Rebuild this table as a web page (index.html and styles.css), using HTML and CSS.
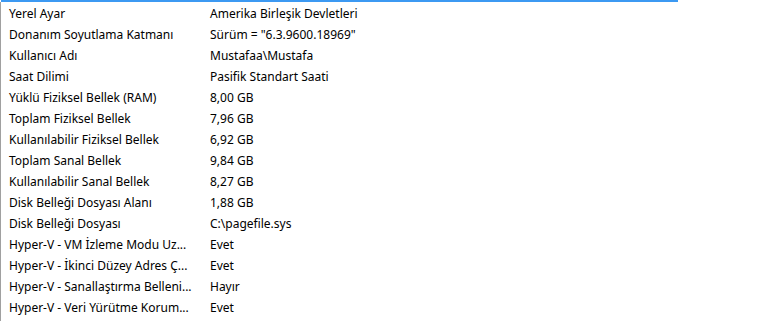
FILE: index.html
```html
<!DOCTYPE html>
<html lang="tr">
<head>
<meta charset="utf-8">
<link rel="stylesheet" href="styles.css">
</head>
<body>
<div class="topbar"></div>
<div class="list">
  <div class="row"><div class="c1">Yerel Ayar</div><div class="c2">Amerika Birleşik Devletleri</div></div>
  <div class="row"><div class="c1">Donanım Soyutlama Katmanı</div><div class="c2">Sürüm = "6.3.9600.18969"</div></div>
  <div class="row"><div class="c1">Kullanıcı Adı</div><div class="c2">Mustafaa\Mustafa</div></div>
  <div class="row"><div class="c1">Saat Dilimi</div><div class="c2">Pasifik Standart Saati</div></div>
  <div class="row"><div class="c1">Yüklü Fiziksel Bellek (RAM)</div><div class="c2">8,00 GB</div></div>
  <div class="row"><div class="c1">Toplam Fiziksel Bellek</div><div class="c2">7,96 GB</div></div>
  <div class="row"><div class="c1">Kullanılabilir Fiziksel Bellek</div><div class="c2">6,92 GB</div></div>
  <div class="row"><div class="c1">Toplam Sanal Bellek</div><div class="c2">9,84 GB</div></div>
  <div class="row"><div class="c1">Kullanılabilir Sanal Bellek</div><div class="c2">8,27 GB</div></div>
  <div class="row"><div class="c1">Disk Belleği Dosyası Alanı</div><div class="c2">1,88 GB</div></div>
  <div class="row"><div class="c1">Disk Belleği Dosyası</div><div class="c2">C:\pagefile.sys</div></div>
  <div class="row"><div class="c1">Hyper-V - VM İzleme Modu Uz...</div><div class="c2">Evet</div></div>
  <div class="row"><div class="c1">Hyper-V - İkinci Düzey Adres Ç...</div><div class="c2">Evet</div></div>
  <div class="row"><div class="c1">Hyper-V - Sanallaştırma Belleni...</div><div class="c2">Hayır</div></div>
  <div class="row"><div class="c1">Hyper-V - Veri Yürütme Korum...</div><div class="c2">Evet</div></div>
</div>
</body>
</html>
```

FILE: styles.css
```css
html, body {
  margin: 0;
  padding: 0;
  background: #ffffff;
}
body {
  width: 772px;
  height: 321px;
  overflow: hidden;
  font-family: "Noto Sans", "Open Sans", sans-serif;
  font-size: 12px;
  color: #000000;
}
.topbar {
  height: 2px;
  width: 677px;
  margin-left: 1px;
  background: #3c99f2;
}
.list {
  border-left: 1px solid #a0a0a0;
  padding-top: 1px;
  height: 319px;
  box-sizing: border-box;
}
.row {
  display: flex;
  height: 21px;
  align-items: center;
}
.c1 {
  width: 200px;
  padding-left: 8px;
  box-sizing: border-box;
  white-space: nowrap;
  flex: none;
}
.c2 {
  padding-left: 9px;
  white-space: nowrap;
}
```
